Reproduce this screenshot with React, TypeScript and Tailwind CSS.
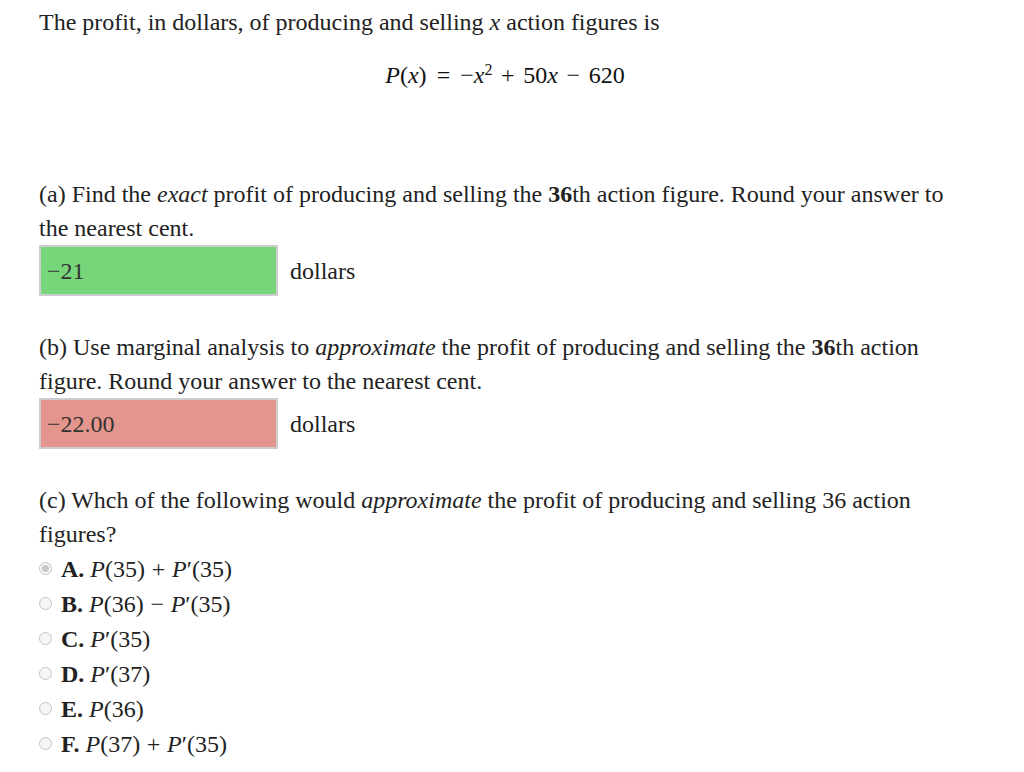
import { ReactNode } from "react";

const texto = "font-['Liberation_Serif',serif] text-[#222]";
const mat = "font-['Liberation_Serif',serif] text-[24px]";

function V({ children }: { children: ReactNode }) {
  return <span className="italic">{children}</span>;
}

function Op({ children, larga }: { children: ReactNode; larga?: boolean }) {
  return <span className={larga ? "mx-[0.36em]" : "mx-[0.28em]"}>{children}</span>;
}

function Rel({ children }: { children: ReactNode }) {
  return <span className="mx-[0.42em]">{children}</span>;
}

function CaixaResposta({ valor, cor }: { valor: string; cor: string }) {
  return (
    <div className="flex items-center">
      <div
        className={`w-[239px] h-[51px] border-2 border-[#cdcdcd] flex items-center px-[6px] text-[24px] text-[#333] ${cor}`}
      >
        {valor}
      </div>
      <span className="ml-[12px]">dollars</span>
    </div>
  );
}

const OPCOES: { letra: string; expr: ReactNode; marcada?: boolean }[] = [
  {
    letra: "A.",
    marcada: true,
    expr: (
      <>
        <V>P</V>(35)<Op>+</Op>
        <V>P</V>′(35)
      </>
    ),
  },
  {
    letra: "B.",
    expr: (
      <>
        <V>P</V>(36)<Op>−</Op>
        <V>P</V>′(35)
      </>
    ),
  },
  { letra: "C.", expr: <><V>P</V>′(35)</> },
  { letra: "D.", expr: <><V>P</V>′(37)</> },
  { letra: "E.", expr: <><V>P</V>(36)</> },
  {
    letra: "F.",
    expr: (
      <>
        <V>P</V>(37)<Op>+</Op>
        <V>P</V>′(35)
      </>
    ),
  },
];

export default function App() {
  return (
    <div className={`${texto} bg-white min-h-screen px-[39px] pt-[5px] text-[24px] leading-[34px]`}>
      <div className="w-[920px]">
        <p>
          The profit, in dollars, of producing and selling <span className={mat}><V>x</V></span> action figures is
        </p>
        <p className={`${mat} text-center mt-[19px] pl-[12px] text-[#111]`}>
          <V>P</V>(<V>x</V>)<Rel>=</Rel>−<V>x</V>
          <sup className="text-[16px]">2</sup>
          <Op larga>+</Op>50<V>x</V>
          <Op larga>−</Op>620
        </p>

        <p className="mt-[85px]">
          (a) Find the <i>exact</i> profit of producing and selling the <b>36</b>th action figure. Round your answer to
          the nearest cent.
        </p>
        <CaixaResposta valor="−21" cor="bg-[#78d67a]" />

        <p className="mt-[34px]">
          (b) Use marginal analysis to <i>approximate</i> the profit of producing and selling the <b>36</b>th action
          figure. Round your answer to the nearest cent.
        </p>
        <CaixaResposta valor="−22.00" cor="bg-[#e4958d]" />

        <p className="mt-[34px]">
          (c) Whch of the following would <i>approximate</i> the profit of producing and selling 36 action figures?
        </p>
        <div>
          {OPCOES.map((op) => (
            <label key={op.letra} className="flex items-center h-[35px]">
              <span className="w-[13px] h-[13px] rounded-full border border-[#c4c4c4] bg-[#f6f6f6] flex items-center justify-center mr-[9px]">
                {op.marcada && <span className="w-[7px] h-[7px] rounded-full bg-[#c9c9c9]" />}
              </span>
              <b className="mr-[6px]">{op.letra}</b>
              <span className={mat}>{op.expr}</span>
            </label>
          ))}
        </div>
      </div>
    </div>
  );
}
